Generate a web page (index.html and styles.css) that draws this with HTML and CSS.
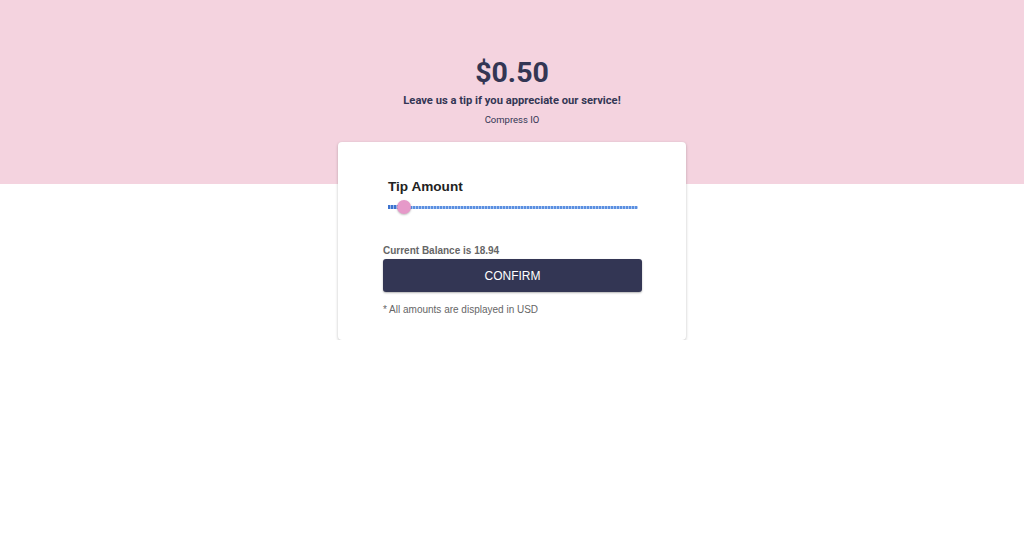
FILE: index.html
```html
<!DOCTYPE html>
<html>
<head>
<meta charset="utf-8">
<link rel="stylesheet" href="styles.css">
</head>
<body>
<div class="hero">
  <h1 class="amount">$0.50</h1>
  <p class="lead">Leave us a tip if you appreciate our service!</p>
  <p class="brand">Compress IO</p>
</div>
<div class="card-wrap">
  <div class="card">
    <div class="tip">
      <h2 class="tip-title">Tip Amount</h2>
      <div class="slider">
        <div class="track-fill"></div>
        <div class="thumb"></div>
        <div class="track"></div>
      </div>
    </div>
    <div class="balance">Current Balance is 18.94</div>
    <button class="confirm">CONFIRM</button>
    <p class="note">* All amounts are displayed in USD</p>
  </div>
</div>
</body>
</html>
```
FILE: styles.css
```css
* { box-sizing: border-box; }
html, body { margin: 0; padding: 0; background: #fff; }
body { font-family: "Liberation Sans", Arial, sans-serif; }

.hero {
  background: #f4d3df;
  height: 184px;
  padding-top: 56px;
  text-align: center;
  color: #333654;
  font-family: Roboto, "Liberation Sans", sans-serif;
}
.amount {
  margin: 0;
  font-size: 28.5px;
  font-weight: 700;
  line-height: 34px;
}
.lead {
  margin: 4px 0 0;
  font-size: 11.2px;
  font-weight: 700;
  line-height: 14px;
}
.brand {
  margin: 6px 0 0;
  font-size: 9.5px;
  line-height: 12px;
}
.card-wrap {
  display: flex;
  justify-content: center;
  margin-top: -42px;
}
.card {
  width: 348px;
  height: 198px;
  background: #fff;
  border-radius: 4px;
  box-shadow: 0 1px 3px rgba(0,0,0,0.25);
  padding: 37px 44px 0 45px;
}
.tip { padding: 0 4px 0 5px; }
.tip-title {
  margin: 0;
  font-size: 13.6px;
  font-weight: 700;
  color: #222;
  line-height: 16px;
}
.slider {
  position: relative;
  height: 16px;
  margin-top: 4px;
  display: flex;
  align-items: center;
}
.track {
  flex: 1;
  height: 3px;
  background: repeating-linear-gradient(90deg, #5b8fe0 0 2px, #a9c6f2 2px 3px);
  border-radius: 1px;
}
.track-fill {
  width: 16px;
  height: 4px;
  background: repeating-linear-gradient(90deg, #3d73cf 0 2px, #9ab9ec 2px 3px);
}
.thumb {
  position: absolute;
  left: 9px;
  top: 1px;
  width: 14px;
  height: 14px;
  border-radius: 50%;
  background: #e699c9;
  box-shadow: 0 1px 2px rgba(0,0,0,0.25);
}
.balance {
  margin-top: 30px;
  font-size: 10px;
  font-weight: 700;
  color: #666;
  line-height: 12px;
}
.confirm {
  display: block;
  width: 259px;
  height: 33px;
  margin-top: 2px;
  border: none;
  border-radius: 3px;
  background: #333654;
  color: #fff;
  font-family: "Liberation Sans", Arial, sans-serif;
  font-size: 12px;
  box-shadow: 0 1px 2px rgba(0,0,0,0.3);
}
.note {
  margin: 12px 0 0;
  font-size: 10px;
  color: #666;
  line-height: 12px;
}
```
